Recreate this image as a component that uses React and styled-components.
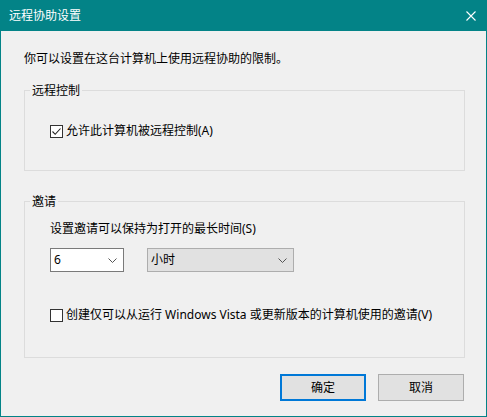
import React from "react";
import styled, { createGlobalStyle } from "styled-components";

const Global = createGlobalStyle`
  html, body { margin: 0; padding: 0; background: #f0f0f0; }
  body { font-family: "Noto Sans", "Noto Sans CJK SC", sans-serif; font-size: 12px; color: #000; }
  * { box-sizing: border-box; }
`;

const Window = styled.div`
  width: 487px;
  height: 417px;
  display: flex;
  flex-direction: column;
  background: #f0f0f0;
  border: 1px solid #038387;
  border-top: none;
`;

const TitleBar = styled.div`
  height: 31px;
  margin: 0 -1px;
  background: #038387;
  color: #fff;
  display: flex;
  align-items: center;
  justify-content: space-between;
  padding: 0 10px 0 9px;
  font-size: 12px;
  line-height: 16px;
`;

const CloseBtn = styled.div`
  width: 10px;
  height: 10px;
  display: flex;
  margin-right: 1px;
`;

const Body = styled.div`
  flex: 1;
  display: flex;
  flex-direction: column;
  padding: 20px 21px 0 23px;
`;

const Text = styled.div`
  line-height: 16px;
  white-space: nowrap;
`;

const Intro = styled(Text)`
  margin-bottom: 16px;
`;

const Group = styled.fieldset`
  margin: 0 0 ${(p) => p.$mb || 0}px 0;
  padding: 0;
  border: 1px solid #dcdcdc;
  min-width: 0;
`;

const GroupContent = styled.div`
  display: flex;
  flex-direction: column;
  align-items: flex-start;
  padding: ${(p) => p.$pad};
`;

const Legend = styled.legend`
  margin-left: 5px;
  padding: 0 2px;
  line-height: 15px;
  font-size: 12px;
`;

const CheckRow = styled.label`
  display: flex;
  align-items: center;
  gap: 3px;
  line-height: 16px;
  height: 16px;
  white-space: nowrap;
  margin-top: ${(p) => p.$mt || 0}px;
`;

const Box = styled.span`
  width: 13px;
  height: 13px;
  border: 1px solid #333;
  background: #fff;
  display: flex;
  align-items: center;
  justify-content: center;
  flex: none;
`;

const ComboRow = styled.div`
  display: flex;
  gap: 23px;
  margin-top: 11px;
`;

const Combo = styled.div`
  width: ${(p) => p.$w}px;
  height: 24px;
  border: 1px solid ${(p) => (p.$editable ? "#7a7a7a" : "#adadad")};
  background: ${(p) => (p.$editable ? "#fff" : "#e1e1e1")};
  display: flex;
  align-items: center;
  justify-content: space-between;
  padding: 0 6px 0 3px;
  line-height: 16px;
`;

const Footer = styled.div`
  display: flex;
  justify-content: flex-end;
  gap: 12px;
  margin-top: 16px;
  padding-right: 1px;
`;

const Button = styled.button`
  width: 86px;
  height: 27px;
  font-family: inherit;
  font-size: 12px;
  color: #000;
  background: #e1e1e1;
  border: ${(p) => (p.$primary ? "2px solid #0078d7" : "1px solid #adadad")};
  padding: 0;
  line-height: 16px;
`;

const Chevron = () => (
  <svg width="9" height="5" viewBox="0 0 9 5">
    <path d="M0.5 0.5 L4.5 4.5 L8.5 0.5" fill="none" stroke="#555" strokeWidth="1" />
  </svg>
);

const Check = () => (
  <svg width="11" height="11" viewBox="0 0 11 11">
    <path d="M1.5 5.5 L4.2 8.3 L9.5 2.5" fill="none" stroke="#222" strokeWidth="1.1" />
  </svg>
);

export default function App() {
  return (
    <>
      <Global />
      <Window>
        <TitleBar>
          <span>远程协助设置</span>
          <CloseBtn>
            <svg width="10" height="10" viewBox="0 0 10 10">
              <path d="M0.5 0.5 L9.5 9.5 M9.5 0.5 L0.5 9.5" stroke="#fff" strokeWidth="1.1" />
            </svg>
          </CloseBtn>
        </TitleBar>
        <Body>
          <Intro>你可以设置在这台计算机上使用远程协助的限制。</Intro>
          <Group $mb={23}>
            <Legend>远程控制</Legend>
            <GroupContent $pad="25px 0 31px 25px">
              <CheckRow>
                <Box>
                  <Check />
                </Box>
                允许此计算机被远程控制(A)
              </CheckRow>
            </GroupContent>
          </Group>
          <Group>
            <Legend>邀请</Legend>
            <GroupContent $pad="12px 0 34px 25px">
              <Text>设置邀请可以保持为打开的最长时间(S)</Text>
              <ComboRow>
                <Combo $w={74} $editable>
                  <span>6</span>
                  <Chevron />
                </Combo>
                <Combo $w={147}>
                  <span>小时</span>
                  <Chevron />
                </Combo>
              </ComboRow>
              <CheckRow $mt={35}>
                <Box />
                创建仅可以从运行 Windows Vista 或更新版本的计算机使用的邀请(V)
              </CheckRow>
            </GroupContent>
          </Group>
          <Footer>
            <Button $primary>确定</Button>
            <Button>取消</Button>
          </Footer>
        </Body>
      </Window>
    </>
  );
}
